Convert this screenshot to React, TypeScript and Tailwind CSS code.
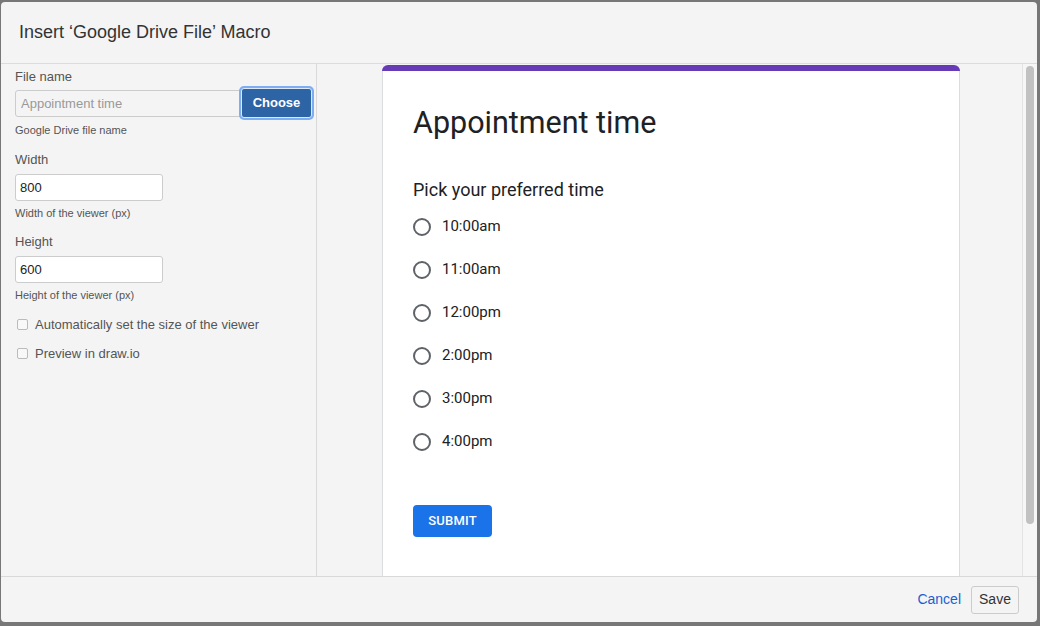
const times = ["10:00am", "11:00am", "12:00pm", "2:00pm", "3:00pm", "4:00pm"];

const Field = ({ label, value, hint }: { label: string; value: string; hint: string }) => (
    <div className="flex flex-col">
        <label className="text-[13px] text-[#555] leading-[16px]">{label}</label>
        <input
            readOnly
            value={value}
            className="mt-[6px] w-[148px] h-[27px] bg-white border border-[#ccc] rounded-[3px] px-[4px] text-[13px] text-[#222] outline-none"
        />
        <span className="mt-[5px] text-[11px] text-[#555] leading-[14px]">{hint}</span>
    </div>
);

const Check = ({ label }: { label: string }) => (
    <div className="flex items-center gap-[7px] pl-[2px]">
        <span className="w-[11px] h-[11px] border border-[#bbb] rounded-[2px] bg-[#f8f8f8]" />
        <span className="text-[13px] text-[#555]">{label}</span>
    </div>
);

export default function App() {
    return (
        <div
            className="w-[1040px] h-[626px] bg-[#777] pt-[2px] pl-[1px] pr-[3px] pb-[4px]"
            style={{ fontFamily: "'Liberation Sans', Arial, sans-serif" }}
        >
            <div className="h-full bg-[#f4f4f4] rounded-[4px] flex flex-col overflow-hidden">
                <div className="h-[62px] shrink-0 flex items-center pl-[18px] border-b border-[#dcdcdc] text-[18px] text-[#333]">
                    Insert ‘Google Drive File’ Macro
                </div>

                <div className="flex-1 flex min-h-0">
                    <div className="w-[316px] shrink-0 border-r border-[#d9d9d9] pl-[14px] pt-[5px] flex flex-col">
                        <label className="text-[13px] text-[#555] leading-[16px]">File name</label>
                        <div className="mt-[3px] flex items-center">
                            <input
                                readOnly
                                placeholder="Appointment time"
                                className="w-[226px] h-[27px] border border-[#ccc] rounded-l-[3px] bg-[#f4f4f4] px-[5px] text-[13px] placeholder-[#999] outline-none"
                            />
                            <button className="w-[71px] h-[30px] bg-[#2c64a5] text-white text-[13px] font-bold rounded-[3px] border border-[#dce8fb] ring-2 ring-[#7eaef2]">
                                Choose
                            </button>
                        </div>
                        <span className="mt-[5px] text-[11px] text-[#555] leading-[14px]">Google Drive file name</span>

                        <div className="mt-[15px] flex flex-col gap-[14px]">
                            <Field label="Width" value="800" hint="Width of the viewer (px)" />
                            <Field label="Height" value="600" hint="Height of the viewer (px)" />
                        </div>

                        <div className="mt-[13px] flex flex-col gap-[9px]">
                            <Check label="Automatically set the size of the viewer" />
                            <Check label="Preview in draw.io" />
                        </div>
                    </div>

                    <div className="flex-1 flex min-w-0">
                        <div className="flex-1 flex pl-[65px] pt-px overflow-hidden">
                            <div
                                className="w-[578px] h-[540px] shrink-0 bg-white border-x border-[#dadce0] rounded-t-[6px] flex flex-col"
                                style={{ fontFamily: "Roboto, Arial, sans-serif" }}
                            >
                                <div className="h-[6px] bg-[#673ab7] rounded-t-[6px] -mx-px" />
                                <div className="pl-[30px] pt-[32px] flex flex-col">
                                    <h1 className="text-[30.5px] leading-[40px] text-[#202124]">Appointment time</h1>
                                    <h2 className="mt-[35px] text-[18px] leading-[24px] text-[#202124]">Pick your preferred time</h2>
                                    <div className="mt-[3px] flex flex-col">
                                        {times.map((t) => (
                                            <div key={t} className="h-[43px] flex items-center gap-[11px]">
                                                <span className="w-[18px] h-[18px] rounded-full border-2 border-[#5f6368]" />
                                                <span className="text-[15px] text-[#202124]">{t}</span>
                                            </div>
                                        ))}
                                    </div>
                                    <button className="mt-[42px] w-[79px] h-[32px] bg-[#1a73e8] text-white text-[13px] font-medium rounded-[4px] tracking-[0.2px]">
                                        SUBMIT
                                    </button>
                                </div>
                            </div>
                        </div>
                        <div className="w-[15px] shrink-0 border-l border-[#e4e4e4] bg-[#f6f6f6] pt-[2px] flex justify-center">
                            <div className="w-[8px] h-[458px] rounded-full bg-[#c1c1c1]" />
                        </div>
                    </div>
                </div>

                <div className="h-[46px] shrink-0 border-t border-[#d9d9d9] flex items-center justify-end pr-[18px] gap-[10px]">
                    <span className="text-[14px] text-[#1a5fd0]">Cancel</span>
                    <button className="w-[48px] h-[28px] border border-[#ccc] rounded-[3px] text-[14px] text-[#333] bg-[#f4f4f4]">
                        Save
                    </button>
                </div>
            </div>
        </div>
    );
}
